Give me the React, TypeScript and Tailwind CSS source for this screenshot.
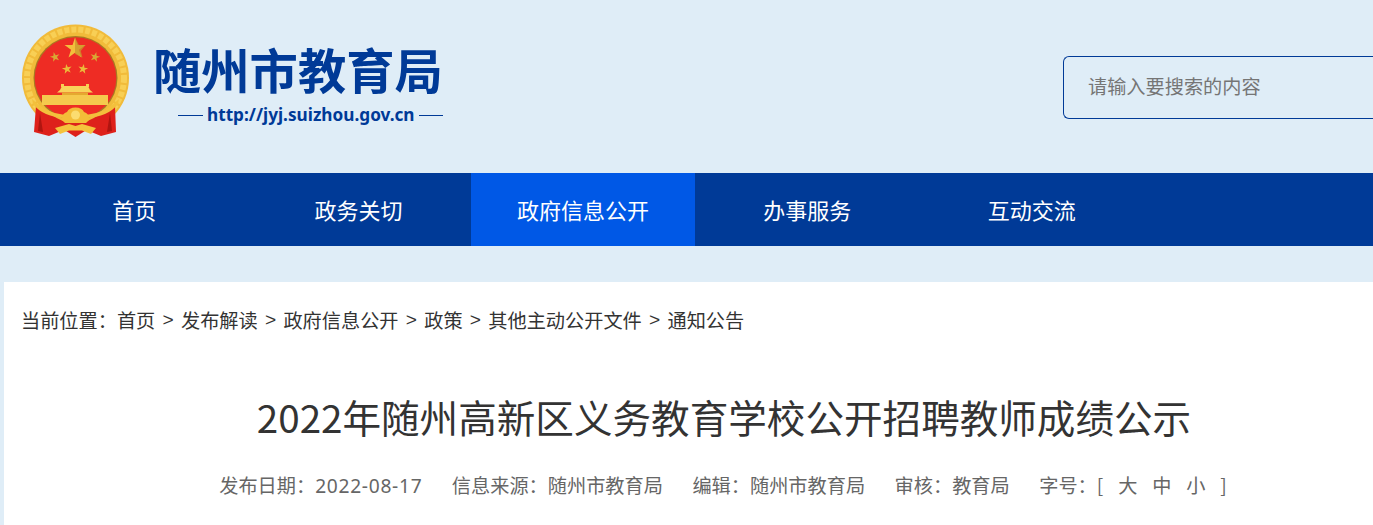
import React from "react";

const CJK = '"Noto Sans CJK SC", "Liberation Sans", sans-serif';

function star(cx: number, cy: number, r: number, rot = 0) {
  const pts: string[] = [];
  for (let i = 0; i < 10; i++) {
    const rad = i % 2 === 0 ? r : r * 0.38;
    const a = ((-90 + i * 36 + rot) * Math.PI) / 180;
    pts.push(`${(cx + rad * Math.cos(a)).toFixed(2)},${(cy + rad * Math.sin(a)).toFixed(2)}`);
  }
  return pts.join(" ");
}

function Emblem() {
  return (
    <svg width="110" height="116" viewBox="22 22 110 116" className="shrink-0">
      {/* wreath */}
      <circle cx="76.5" cy="77" r="53.5" fill="#f1bb3a" />
      <circle cx="76.5" cy="77" r="48.5" fill="none" stroke="#f8cf55" strokeWidth="6" strokeDasharray="5 2" />
      <circle cx="76.5" cy="77" r="42" fill="#a87a22" />
      <circle cx="76.5" cy="77" r="40.8" fill="#ee2c24" />
      {/* stars */}
      <polygon points={star(76, 47.5, 11)} fill="#f3bf3c" />
      <polygon points={`76,47.5 76,36.5 79.9,44 86.5,44 81.8,50 83.5,56.5 76,53`} fill="#c9962c" opacity="0.75" />
      <polygon points={star(56, 56, 5.2, -15)} fill="#d9a733" />
      <polygon points={star(96, 56, 5.2, 15)} fill="#d9a733" />
      <polygon points={star(68, 68, 5.2, -10)} fill="#ecba3a" />
      <polygon points={star(84, 68, 5.2, 10)} fill="#ecba3a" />
      {/* gate */}
      <rect x="62" y="83" width="3" height="3" fill="#f8d050" />
      <rect x="87" y="83" width="3" height="3" fill="#f8d050" />
      <path d="M63 85 L89 85 L91 89 L94 91.5 L58 91.5 L61 89 Z" fill="#f9d35a" />
      <rect x="63" y="91.5" width="26" height="2.5" fill="#e5a92f" />
      <rect x="43" y="94" width="66" height="10" fill="#f5c94d" />
      {/* drapes */}
      <path d="M37 105 L46 109 Q58 119 70 122 L82 122 Q95 119 106 109 L116 105 L117 131 L102 135 L90 130 L62 130 L50 135 L35 131 Z" fill="#de211b" />
      <path d="M41 112 L39 130 L44 131 Z M111 112 L113 130 L108 131 Z" fill="#b01510" />
      <path d="M67 130 L86 130 L76.5 136 Z" fill="#de211b" />
      {/* gold bands */}
      <path d="M33 98 Q46 112 66 114 L66 117 Q44 116 34 103 Z" fill="#f3c03c" />
      <path d="M120 98 Q107 112 87 114 L87 117 Q109 116 119 103 Z" fill="#f3c03c" />
      {/* medallion */}
      <path d="M63 119 Q63 112 68 111 Q70 106.5 76.5 106.5 Q83 106.5 85 111 Q90 112 90 119 L87 122 L66 122 Z" fill="#f3bd38" />
      <circle cx="76.5" cy="114" r="4.5" fill="#fbdc70" />
      {/* bow */}
      <path d="M56 127 L70 123 L76.5 125 L83 123 L97 127 L92 133 L83 129.5 L70 129.5 L61 133 Z" fill="#f5c33d" />
    </svg>
  );
}

export default function App() {
  const crumbs = ["首页", "发布解读", "政府信息公开", "政策", "其他主动公开文件", "通知公告"];
  const nav = ["首页", "政务关切", "政府信息公开", "办事服务", "互动交流"];
  return (
    <div className="h-[525px] overflow-hidden bg-[#dfedf7]" style={{ fontFamily: CJK }}>
      <header className="flex h-[173px] pl-[21px]">
        <div className="mt-[23px]">
          <Emblem />
        </div>
        <div className="ml-[22px] mt-[33px] flex w-[296px] flex-col items-start">
          <h1 className="text-[48.3px] font-bold leading-[70px] text-[#003a97] whitespace-nowrap">随州市教育局</h1>
          <div className="mt-0 flex w-full items-center pl-[25px] text-[#003a97]">
            <span className="h-px w-[25px] bg-[#003a97]" />
            <span className="mx-[4px] text-[17.2px] font-bold leading-[24px] whitespace-nowrap" style={{ fontFamily: '"Noto Sans", sans-serif' }}>
              http://jyj.suizhou.gov.cn
            </span>
            <span className="h-px w-[24px] bg-[#003a97]" />
          </div>
        </div>
        <div className="ml-auto mt-[56px] flex h-[63px] w-[310px] items-center rounded-l-[6px] border border-r-0 border-[#003a97] pb-[3px] pl-[24px] text-[19.2px] text-[#757575]">
          请输入要搜索的内容
        </div>
      </header>

      <nav className="flex h-[73px] bg-[#003a97] pb-[1px] pl-[22px]">
        {nav.map((n, i) => (
          <a
            key={n}
            className={`flex w-[224.4px] items-center justify-center text-[22px] text-white ${i === 2 ? "-mb-[1px] bg-[#0058e6]" : ""}`}
          >
            {n}
          </a>
        ))}
      </nav>

      <main className="ml-[4px] mt-[36px] h-[300px] w-[1440px] bg-white pt-[24px]">
        <div className="flex items-center pl-[17px] text-[19.2px] leading-[28px] text-[#333]">
          <span>当前位置：</span>
          {crumbs.map((c, i) => (
            <React.Fragment key={c}>
              {i > 0 && <span className="w-[25.7px] text-center" style={{ fontFamily: '"Liberation Sans", sans-serif' }}>&gt;</span>}
              <span>{c}</span>
            </React.Fragment>
          ))}
        </div>
        <h2 className="mt-[54px] text-center text-[38.6px] font-normal leading-[56px] text-[#333] whitespace-nowrap">
          2022年随州高新区义务教育学校公开招聘教师成绩公示
        </h2>
        <div className="mt-[27px] flex justify-center gap-[29.5px] pr-[2px] text-[19.2px] leading-[28px] text-[#666] whitespace-nowrap">
          <span>发布日期：<span className="tracking-[0.7px]" style={{ fontFamily: '"Noto Sans", sans-serif' }}>2022-08-17</span></span>
          <span>信息来源：随州市教育局</span>
          <span>编辑：随州市教育局</span>
          <span>审核：教育局</span>
          <span className="flex">
            字号：
            <span className="flex w-[130px] justify-between">
              <span>[</span><span>大</span><span>中</span><span>小</span><span>]</span>
            </span>
          </span>
        </div>
      </main>
    </div>
  );
}
